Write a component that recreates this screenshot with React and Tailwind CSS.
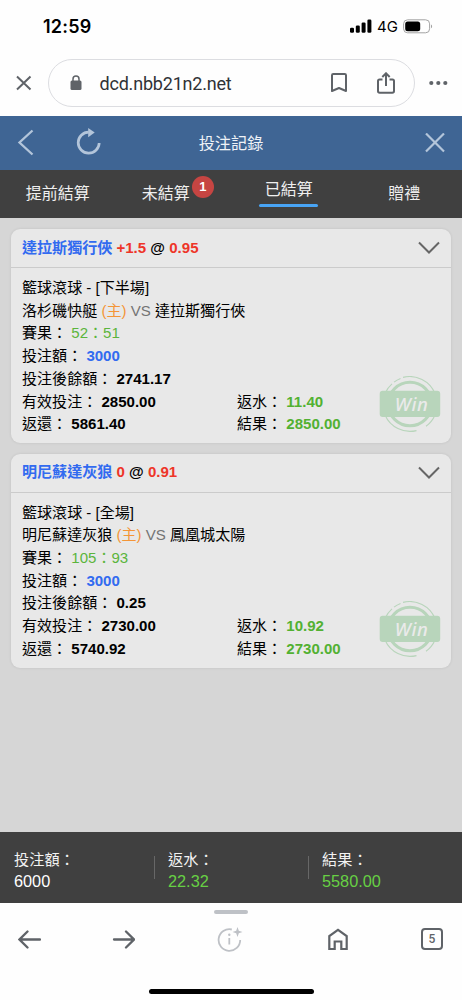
import clsx from 'clsx';

const bets = [
  {
    id: 1,
    pick: '達拉斯獨行俠',
    handicap: '+1.5',
    odds: '0.95',
    event: '籃球滾球 - [下半場]',
    home: '洛杉磯快艇',
    away: '達拉斯獨行俠',
    score: '52：51',
    stake: '3000',
    balance: '2741.17',
    validStake: '2850.00',
    rebate: '11.40',
    returned: '5861.40',
    result: '2850.00',
  },
  {
    id: 2,
    pick: '明尼蘇達灰狼',
    handicap: '0',
    odds: '0.91',
    event: '籃球滾球 - [全場]',
    home: '明尼蘇達灰狼',
    away: '鳳凰城太陽',
    score: '105：93',
    stake: '3000',
    balance: '0.25',
    validStake: '2730.00',
    rebate: '10.92',
    returned: '5740.92',
    result: '2730.00',
  },
];

const tabs = [
  { name: '提前結算' },
  { name: '未結算', count: 1 },
  { name: '已結算', active: true },
  { name: '贈禮' },
];

const totals = [
  { label: '投注額：', value: '6000', color: 'text-white' },
  { label: '返水：', value: '22.32', color: 'text-[#67d044]' },
  { label: '結果：', value: '5580.00', color: 'text-[#67d044]' },
];

const StatusBar = () => (
  <div className="flex h-[52px] items-center justify-between pl-[43px] pr-[29px] font-['Inter','Roboto',sans-serif] text-black">
    <span className="pt-px text-[18px] font-semibold leading-none tracking-[0.2px]">12:59</span>
    <div className="flex items-center">
      <svg className="h-[14px] w-[22px]" viewBox="0 0 22 14">
        <rect x="0" y="8.8" width="4" height="5" rx="1.3" />
        <rect x="5.8" y="6.5" width="4" height="7.3" rx="1.3" />
        <rect x="11.6" y="3.5" width="4" height="10.3" rx="1.3" />
        <rect x="17.4" y="0.5" width="4" height="13.3" rx="1.3" />
      </svg>
      <span className="ml-[5px] w-[21px] text-[15px] leading-none">4G</span>
      <svg className="ml-[5px] h-[15px] w-[30px]" viewBox="0 0 30 15">
        <rect x="0.6" y="0.8" width="26" height="13" rx="4" fill="none" stroke="#a3a3a3" />
        <rect x="2.2" y="2.4" width="15" height="9.8" rx="2.5" />
        <path d="M28 5.5c1.5.6 1.5 3.2 0 3.8z" fill="#a3a3a3" />
      </svg>
    </div>
  </div>
);

const AddressBar = () => (
  <div className="flex h-[64px] items-start pl-[16px] pr-[14px] pt-[7px] text-[#5f6368]">
    <svg className="mt-[16px] h-4 w-4 shrink-0" viewBox="0 0 16 16" fill="none" stroke="currentColor" strokeWidth="2">
      <path d="M1 1.5l13.5 13M14.5 1.5L1 14.5" />
    </svg>
    <div className="ml-[15.5px] flex h-[48px] w-[367px] shrink-0 items-center rounded-full border border-[#dcdde1] pl-[21px] pr-[19px]">
      <svg className="h-[16px] w-[12px]" viewBox="0 0 12 16">
        <rect x="0.5" y="5.5" width="11" height="9.5" rx="1.5" fill="currentColor" />
        <path d="M3 6V4a3 3 0 0 1 6 0v2" fill="none" stroke="currentColor" strokeWidth="1.5" />
      </svg>
      <span className="ml-[18px] font-['Roboto',sans-serif] text-[18px] tracking-[-0.2px] text-[#303236]">dcd.nbb21n2.net</span>
      <svg className="ml-auto h-[20px] w-[16px]" viewBox="0 0 16 20" fill="none" stroke="currentColor" strokeWidth="2">
        <path d="M1 18V2.3Q1 1 2.3 1h11.4Q15 1 15 2.3V18l-7-3z" strokeLinejoin="round" />
      </svg>
      <svg className="ml-[30px] h-[22px] w-[18px]" viewBox="0 0 18 22" fill="none" stroke="currentColor" strokeWidth="2">
        <path d="M5.5 7.5H2.5Q1 7.5 1 9v10q0 1.8 1.7 1.8h12.6Q17 20.8 17 19V9q0-1.5-1.5-1.5h-3M9 14V1.5M5.3 5L9 1.3 12.7 5" />
      </svg>
    </div>
    <svg className="ml-auto mt-[21px] h-[6px] w-[19px]" viewBox="0 0 19 6" fill="currentColor">
      <circle cx="2.3" cy="3" r="2.1" />
      <circle cx="9.3" cy="3" r="2.1" />
      <circle cx="16.3" cy="3" r="2.1" />
    </svg>
  </div>
);

const TitleBar = () => (
  <div className="flex h-[54px] items-center justify-between bg-[#3f6594] pl-[17px] pr-[17px] text-[#b3c5da]">
    <div className="flex w-[90px] items-center">
      <svg className="h-[28px] w-[17px]" viewBox="0 0 17 28" fill="none" stroke="currentColor" strokeWidth="2.3">
        <path d="M15.5 1.5L2.500 13.500l13 12" />
      </svg>
      <svg className="ml-[42px] h-[30px] w-[26px]" viewBox="0 0 26 30">
        <path d="M12.700 4.200A10.500 10.500 0 1 0 23.200 15" fill="none" stroke="currentColor" strokeWidth="2.700" />
        <path d="M12.200 0l6.500 4.500-6.500 4.700z" fill="currentColor" />
      </svg>
    </div>
    <h1 className="text-[16.2px] text-[#eef2f7]">投注記錄</h1>
    <div className="flex w-[90px] justify-end">
      <svg className="h-[20px] w-[20px]" viewBox="0 0 20 20" fill="none" stroke="currentColor" strokeWidth="2.2">
        <path d="M1 .5l18 18M19 .5L1 18.500" />
      </svg>
    </div>
  </div>
);

const Tabs = () => (
  <nav className="grid h-[48px] grid-cols-4 bg-[#404040] text-[16px] leading-[24px] text-[#efefef]">
    {tabs.map((tab) => (
      <div key={tab.name} className="flex flex-col items-center">
        <div className={clsx('flex', tab.active ? 'pt-[8px]' : 'pt-[12px]')}>
          <span>{tab.name}</span>
          {tab.count && (
            <span className="-mr-[9px] -mt-[6px] ml-[2px] flex h-[22px] w-[22px] items-center justify-center rounded-full bg-[#c64542] text-[13px] font-bold text-white">
              {tab.count}
            </span>
          )}
        </div>
        {tab.active && <div className="mt-[2px] h-[3px] w-[59px] rounded-full bg-[#48a4f5]" />}
      </div>
    ))}
  </nav>
);

const WinStamp = () => (
  <svg className="h-[56px] w-[62px]" viewBox="0 0 62 56" fill="none" stroke="#b8d5bb">
    <circle cx="31" cy="28" r="21.800" strokeWidth="3" />
    <path
      d="M6.500 16.500A27 27 0 0 1 13 7.800M15 6.100a27 27 0 0 1 6.500-3.700M24 1.400A27.300 27.300 0 0 1 56 17.500M56 39a27 27 0 0 1-9 11.300M37.500 54.600A27.300 27.300 0 0 1 6 39"
      strokeWidth="1.100"
    />
    <rect x="0.700" y="14.800" width="60.500" height="26.300" rx="3" fill="#b8d5bb" stroke="none" />
    <text
      x="32.300"
      y="34.800"
      textAnchor="middle"
      textLength="33"
      fill="#eaeaea"
      stroke="none"
      className="font-['Noto_Sans','Open_Sans',sans-serif] text-[18.500px] font-medium italic"
    >
      Win
    </text>
  </svg>
);

const Field = ({ label, value, className = 'font-bold' }) => (
  <div>
    {label} <span className={className}>{value}</span>
  </div>
);

const BetCard = ({ bet }) => (
  <article className="relative h-[214px] rounded-[9px] bg-[#e8e8e8] shadow-[0_0_3px_rgba(0,0,0,0.1)]">
    <header className="flex h-[39px] items-center justify-between border-b border-[#cbcbcb] pl-[11px] pr-[11px] font-bold">
      <div>
        <span className="text-[#326bf0]">{bet.pick}</span> <span className="text-[#ee3528]">{bet.handicap}</span> @{' '}
        <span className="text-[#ee3528]">{bet.odds}</span>
      </div>
      <svg className="h-[14px] w-[22px]" viewBox="0 0 22 14" fill="none" stroke="#666" strokeWidth="2">
        <path d="M1 1.5l10 10 10-10" />
      </svg>
    </header>
    <div className="px-[11px] pt-[9px] leading-[22.7px]">
      <div>{bet.event}</div>
      <div>
        {bet.home} <span className="text-[#f49537]">(主)</span> <span className="text-[#747474]">VS</span> {bet.away}
      </div>
      <Field label="賽果：" value={bet.score} className="text-[#5bb53c]" />
      <Field label="投注額：" value={bet.stake} className="font-bold text-[#326bf0]" />
      <Field label="投注後餘額：" value={bet.balance} />
      <div className="grid grid-cols-[215px_1fr]">
        <Field label="有效投注：" value={bet.validStake} />
        <Field label="返水：" value={bet.rebate} className="font-bold text-[#52b132]" />
        <Field label="返還：" value={bet.returned} />
        <Field label="結果：" value={bet.result} className="font-bold text-[#52b132]" />
      </div>
    </div>
    {/* Stamp sits over the bottom right of the card */}
    <div className="absolute bottom-[11px] right-[10px]">
      <WinStamp />
    </div>
  </article>
);

const Summary = () => (
  <footer className="flex h-[71px] bg-[#404040] pt-[16px] text-[15.2px] leading-[22px] text-[#f2f2f2]">
    {totals.map((item, i) => (
      <div key={item.label} className="flex w-[154px]">
        {i > 0 && <div className="mt-[8px] h-[23px] w-px bg-[#676767]" />}
        <div className={i > 0 ? 'pl-[13px]' : 'pl-[14px]'}>
          <div className="pt-px">{item.label}</div>
          <div className={clsx('-mt-px text-[16.3px]', item.color)}>{item.value}</div>
        </div>
      </div>
    ))}
  </footer>
);

const BrowserToolbar = () => (
  <div className="flex h-[97px] flex-col items-center bg-[#fefefe] text-[#5f6368]">
    <div className="mt-[7px] h-[4px] w-[34px] rounded-full bg-[#bec1c6]" />
    <div className="mt-[11px] flex h-[28px] w-full items-center pl-[18px]">
      <svg className="h-[20px] w-[23px]" viewBox="0 0 23 20" fill="none" stroke="currentColor" strokeWidth="2.3" strokeLinecap="round">
        <path d="M22 10.500H2M9.500 2.500L1.500 10.500l8 8" />
      </svg>
      <svg className="ml-[71px] h-[20px] w-[23px]" viewBox="0 0 23 20" fill="none" stroke="currentColor" strokeWidth="2.3" strokeLinecap="round">
        <path d="M2 10.500h20M14 2.500l8 8-8 8" />
      </svg>
      <svg className="ml-[82px] h-[26px] w-[26px]" viewBox="0 0 26 26" fill="none" stroke="#bec1c6" strokeWidth="1.8">
        <path d="M14.800 3.500A10.800 10.800 0 1 0 23.200 14M12.300 12v6.500" />
        <circle cx="12.3" cy="8.8" r="1.2" fill="#bec1c6" stroke="none" />
        <path d="M20.500 1l1.300 3.700L25.500 6l-3.700 1.300-1.300 3.700-1.300-3.700L15.500 6l3.700-1.300z" fill="#bec1c6" stroke="none" />
      </svg>
      <svg className="ml-[85px] h-[23px] w-[20px]" viewBox="0 0 20 23" fill="none" stroke="currentColor" strokeWidth="2.200">
        <path d="M1.300 21V8L10 1.800 18.700 8v13h-5.400v-7.500H6.700V21z" />
      </svg>
      <div className="ml-[73px] flex h-[22px] w-[22px] items-center justify-center rounded-[4px] border-2 border-[#5f6368] font-['Roboto',sans-serif] text-[12px] font-medium">
        5
      </div>
    </div>
    <div className="mt-[36px] h-[5px] w-[165px] rounded-full bg-black" />
  </div>
);

const App = () => (
  <div className="flex h-[1000px] w-[462px] flex-col overflow-hidden bg-[#fefefe] font-['Liberation_Sans','Noto_Sans_CJK_TC',sans-serif]">
    <StatusBar />
    <AddressBar />
    <TitleBar />
    <Tabs />
    <main className="flex flex-1 flex-col gap-[10.5px] bg-[#d6d6d6] px-[11px] pt-[11px] text-[15.05px] text-black">
      {bets.map((bet) => (
        <BetCard key={bet.id} bet={bet} />
      ))}
    </main>
    <Summary />
    <BrowserToolbar />
  </div>
);

export default App;
